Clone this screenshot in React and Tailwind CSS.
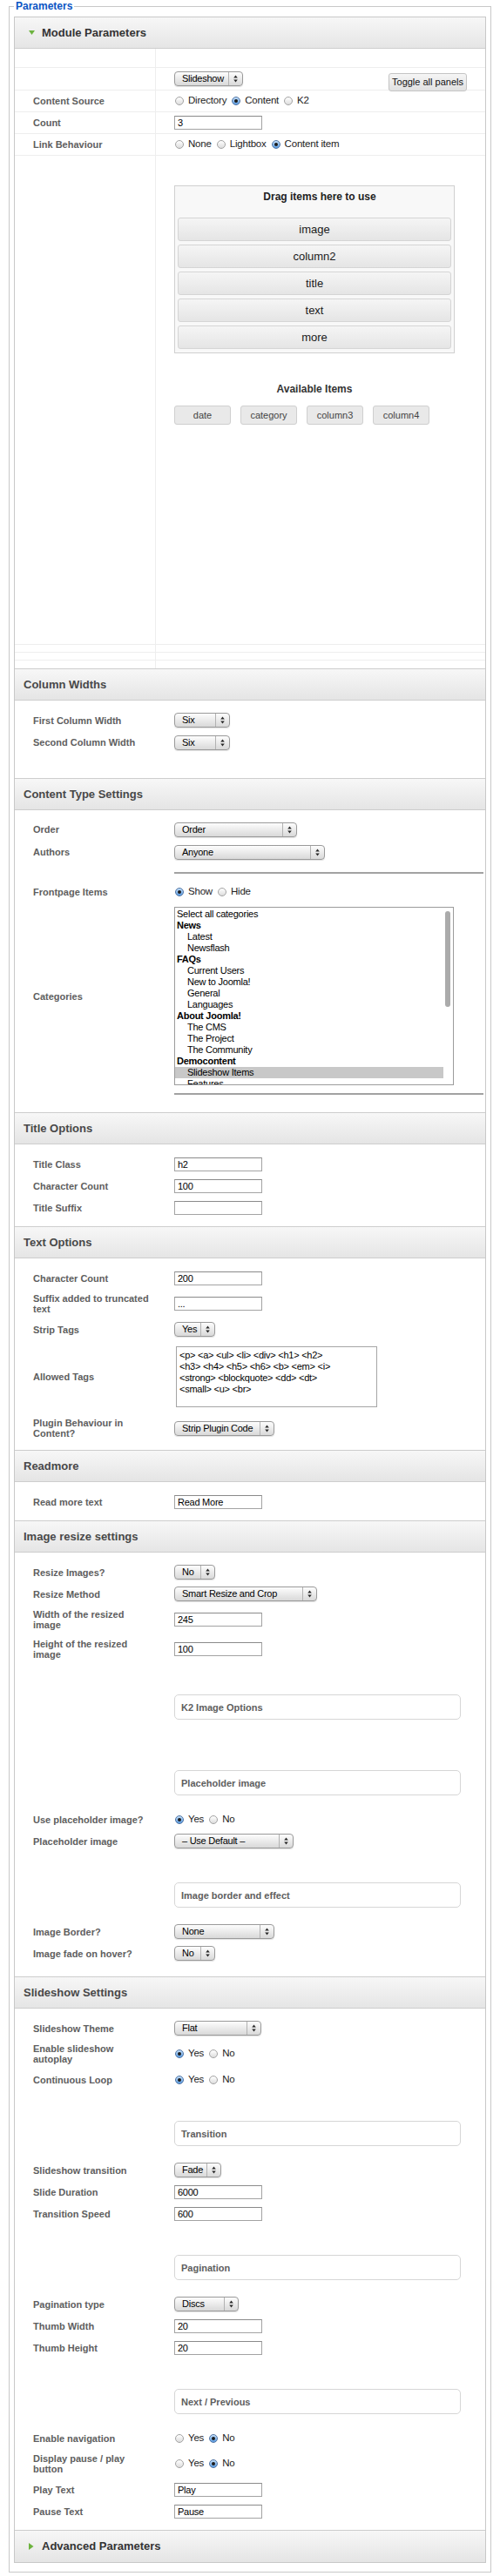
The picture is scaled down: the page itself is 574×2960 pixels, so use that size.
import React from 'react';

const SANS = "font-['Liberation_Sans',Arial,sans-serif]";
const LABEL = `${SANS} text-[11px] leading-[12px] font-bold text-[#5e5e5e]`;
const FIELD = `${SANS} text-[11px] tracking-[-0.25px] text-black`;

const Arrows = () => (
    <svg width="5" height="9" viewBox="0 0 5 9">
        <path d="M2.5 0.5L4.8 3.6H0.2Z M2.5 8.5L0.2 5.4H4.8Z" fill="#2a2a2a" />
    </svg>
);

const Select = ({ value, w }) => (
    <div className={`${w} h-[17px] flex rounded-[4px] border border-[#9a9a9a] bg-linear-to-b from-[#fdfdfd] to-[#d9d9d9] shadow-[0_1px_1px_rgba(0,0,0,0.12)]`}>
        <div className={`flex-1 pl-[8px] leading-[15px] whitespace-nowrap overflow-hidden ${FIELD}`}>{value}</div>
        <div className="w-[16px] shrink-0 border-l border-[#b2b2b2] flex items-center justify-center">
            <Arrows />
        </div>
    </div>
);

const Input = ({ value }) => (
    <div className={`w-[101px] h-[16px] border border-[#a3a3a3] border-t-[#8a8a8a] bg-white pl-[3px] leading-[14px] ${FIELD}`}>{value}</div>
);

const Radio = ({ checked, label }) => (
    <span className="inline-flex items-center mr-[6px]">
        <span className={`w-[10px] h-[10px] rounded-full border flex items-center justify-center ${checked ? 'border-[#4f73a3] bg-linear-to-b from-[#c4e0fb] to-[#5a9be0]' : 'border-[#a3a3a3] bg-linear-to-b from-white to-[#dddddd]'}`}>
            {checked && <span className="w-[4px] h-[4px] rounded-full bg-[#1c1c1c]" />}
        </span>
        <span className={`ml-[5px] text-[11.5px] tracking-[-0.2px] text-[#222] ${SANS}`}>{label}</span>
    </span>
);

const Radios = ({ options, value }) => (
    <div className="flex items-center ml-[1px]">
        {options.map((o) => <Radio key={o} label={o} checked={o === value} />)}
    </div>
);

const Header = ({ title, arrow, pos = 'mid' }) => {
    const edge = pos === 'first' ? 'h-[36px] border-b' : pos === 'last' ? 'h-[37px] border-t' : 'h-[37px] border-y';
    return (
        <div className={`${edge} border-[#cdcdcd] bg-linear-to-b from-[#f7f7f7] to-[#e5e5e5] flex items-center ${arrow ? 'pl-[16px]' : 'pl-[10px]'}`}>
            {arrow === 'down' && (
                <svg width="7" height="5" viewBox="0 0 7 5" className="mr-[8px]"><path d="M0 0H7L3.5 5Z" fill="#6cb33e" /></svg>
            )}
            {arrow === 'right' && (
                <svg width="6" height="8" viewBox="0 0 6 8" className="mr-[9px]"><path d="M0 0L5.5 4L0 8Z" fill="#6cb33e" /></svg>
            )}
            <span className={`${SANS} text-[13px] font-bold ${arrow ? 'text-[#333]' : 'text-[#484848]'}`}>{title}</span>
        </div>
    );
};

const Row = ({ label, h = 'h-[25px]', children }) => (
    <div className={`flex items-center ${h}`}>
        <div className="w-[183px] shrink-0 pl-[21px]">
            <div className={`w-[137px] ${LABEL}`}>{label}</div>
        </div>
        <div className="flex items-center">{children}</div>
    </div>
);

const Group = ({ title, top = 'pt-[35px]' }) => (
    <div className={`${top} pb-[15px] pl-[183px]`}>
        <div className={`w-[329px] h-[29px] rounded-[5px] border border-[#d6d6d6] bg-white flex items-center pl-[7px] ${LABEL}`}>{title}</div>
    </div>
);

const ModRow = ({ h, label, children, line = true, align = 'items-center' }) => (
    <div className={`flex ${h} ${line ? 'border-b border-[#eeeeee]' : ''}`}>
        <div className={`w-[162px] shrink-0 border-r border-[#eeeeee] pl-[21px] flex items-center ${LABEL}`}>{label}</div>
        <div className={`flex-1 pl-[21px] flex ${align}`}>{children}</div>
    </div>
);

const categories = [
    ['Select all categories', 0],
    ['News', 1],
    ['Latest', 2],
    ['Newsflash', 2],
    ['FAQs', 1],
    ['Current Users', 2],
    ['New to Joomla!', 2],
    ['General', 2],
    ['Languages', 2],
    ['About Joomla!', 1],
    ['The CMS', 2],
    ['The Project', 2],
    ['The Community', 2],
    ['Democontent', 1],
    ['Slideshow Items', 2, true],
    ['Features', 2],
];

const CategoryList = () => (
    <div className="w-[321px] h-[205px] border border-[#9b9b9b] bg-white flex overflow-hidden">
        <div className="flex-1 pt-[1px]">
            {categories.map(([name, level, selected]) => (
                <div
                    key={name}
                    className={`h-[13px] leading-[13px] whitespace-nowrap ${FIELD} ${level === 2 ? 'pl-[14px]' : 'pl-[2px]'} ${level === 1 ? 'font-bold' : ''} ${selected ? 'bg-[#c8c8c8]' : ''}`}
                >
                    {name}
                </div>
            ))}
        </div>
        <div className="w-[11px] shrink-0 pt-[4px] pl-[2px]">
            <div className="w-[6px] h-[110px] rounded-full bg-[#ababab]" />
        </div>
    </div>
);

const dragItems = ['image', 'column2', 'title', 'text', 'more'];
const available = ['date', 'category', 'column3', 'column4'];

const ModuleTable = () => (
    <div>
        <ModRow h="h-[22px]" />
        <ModRow h="h-[26px]" align="items-start">
            <div className="mt-[4px]"><Select value="Slideshow" w="w-[79px]" /></div>
            <div className={`ml-auto mt-[6px] mr-[21px] w-[90px] h-[21px] rounded-[3px] border border-[#c4c4c4] bg-linear-to-b from-[#f5f5f5] to-[#e1e1e1] flex items-center justify-center text-[11px] text-[#111] ${SANS}`}>
                Toggle all panels
            </div>
        </ModRow>
        <ModRow h="h-[25px]" label="Content Source">
            <Radios options={['Directory', 'Content', 'K2']} value="Content" />
        </ModRow>
        <ModRow h="h-[25px]" label="Count">
            <Input value="3" />
        </ModRow>
        <ModRow h="h-[25px]" label="Link Behaviour">
            <Radios options={['None', 'Lightbox', 'Content item']} value="Content item" />
        </ModRow>
        <ModRow h="h-[562px]" align="items-start">
            <div className="pt-[34px]">
                <div className="w-[322px] border border-[#d0d0d0] bg-[#f8f8f8] px-[3px] pb-[4px]">
                    <div className={`h-[36px] pt-[5px] pl-[12px] text-center text-[12px] leading-[14px] font-bold text-[#222] ${SANS}`}>
                        Drag items here to use
                    </div>
                    <div className="flex flex-col gap-[4px]">
                        {dragItems.map((it) => (
                            <div
                                key={it}
                                className={`h-[27px] rounded-[3px] border border-[#d5d5d5] bg-linear-to-b from-[#f5f5f5] to-[#e5e5e5] flex items-center justify-center text-[13px] text-[#1a1a1a] ${SANS}`}
                            >
                                {it}
                            </div>
                        ))}
                    </div>
                </div>
                <div className={`w-[322px] mt-[34px] h-[14px] leading-[14px] text-center text-[12px] font-bold text-[#333] ${SANS}`}>
                    Available Items
                </div>
                <div className="mt-[12px] flex gap-[11px]">
                    {available.map((it) => (
                        <div
                            key={it}
                            className={`w-[65px] h-[22px] rounded-[3px] border border-[#cfcfcf] bg-[#e9e9e9] flex items-center justify-center text-[11px] text-[#444] ${SANS}`}
                        >
                            {it}
                        </div>
                    ))}
                </div>
            </div>
        </ModRow>
        <ModRow h="h-[9px]" />
        <ModRow h="h-[9px]" />
        <ModRow h="h-[9px]" line={false} />
    </div>
);

const App = () => (
    <div className="min-h-screen bg-white pt-0">
        <fieldset className="ml-[10px] w-[554px] border border-[#c8c8c8] px-[5px] pt-[5px] pb-[10px]">
            <legend className={`px-[2px] text-[12px] leading-[14px] font-bold text-[#0b55c4] ${SANS}`}>Parameters</legend>
            <div className="border border-[#c8c8c8]">
                <Header title="Module Parameters" arrow="down" pos="first" />
                <ModuleTable />

                <Header title="Column Widths" />
                <div className="pt-[10px] pb-[28px]">
                    <Row label="First Column Width"><Select value="Six" w="w-[64px]" /></Row>
                    <Row label="Second Column Width" h="h-[26px]"><Select value="Six" w="w-[64px]" /></Row>
                </div>

                <Header title="Content Type Settings" />
                <div className="pt-[9px] pb-[20px]">
                    <Row label="Order" h="h-[26px]"><Select value="Order" w="w-[141px]" /></Row>
                    <Row label="Authors" h="h-[26px]"><Select value="Anyone" w="w-[173px]" /></Row>
                    <div className="mt-[10px] ml-[183px] w-[355px] h-[2px] bg-[#a2a2a2]" />
                    <div className="h-[8px]" />
                    <Row label="Frontpage Items">
                        <Radios options={['Show', 'Hide']} value="Show" />
                    </Row>
                    <div className="flex items-center py-[5px]">
                        <div className="w-[183px] shrink-0 pl-[21px]">
                            <div className={LABEL}>Categories</div>
                        </div>
                        <CategoryList />
                    </div>
                    <div className="mt-[4px] ml-[183px] w-[355px] h-[2px] bg-[#a2a2a2]" />
                </div>

                <Header title="Title Options" />
                <div className="pt-[10px] pb-[9px]">
                    <Row label="Title Class"><Input value="h2" /></Row>
                    <Row label="Character Count"><Input value="100" /></Row>
                    <Row label="Title Suffix"><Input value="" /></Row>
                </div>

                <Header title="Text Options" />
                <div className="pt-[10px] pb-[8px]">
                    <Row label="Character Count"><Input value="200" /></Row>
                    <Row label="Suffix added to truncated text" h="h-[34px]"><Input value="..." /></Row>
                    <Row label="Strip Tags"><Select value="Yes" w="w-[47px]" /></Row>
                    <Row label="Allowed Tags" h="h-[84px]">
                        <div className={`ml-[2px] w-[231px] h-[70px] border border-[#a5a5a5] bg-white pl-[3px] pt-[3px] leading-[13px] ${FIELD}`}>
                            {'<p> <a> <ul> <li> <div> <h1> <h2>'}<br />
                            {'<h3> <h4> <h5> <h6> <b> <em> <i>'}<br />
                            {'<strong> <blockquote> <dd> <dt>'}<br />
                            {'<small> <u> <br>'}
                        </div>
                    </Row>
                    <Row label="Plugin Behaviour in Content?" h="h-[34px]"><Select value="Strip Plugin Code" w="w-[115px]" /></Row>
                </div>

                <Header title="Readmore" />
                <div className="pt-[10px] pb-[9px]">
                    <Row label="Read more text"><Input value="Read More" /></Row>
                </div>

                <Header title="Image resize settings" />
                <div className="pt-[10px] pb-[14px]">
                    <Row label="Resize Images?"><Select value="No" w="w-[47px]" /></Row>
                    <Row label="Resize Method"><Select value="Smart Resize and Crop" w="w-[164px]" /></Row>
                    <Row label="Width of the resized image" h="h-[34px]"><Input value="245" /></Row>
                    <Row label="Height of the resized image" h="h-[34px]"><Input value="100" /></Row>
                    <Group title="K2 Image Options" />
                    <Group title="Placeholder image" top="pt-[43px]" />
                    <Row label="Use placeholder image?">
                        <Radios options={['Yes', 'No']} value="Yes" />
                    </Row>
                    <Row label="Placeholder image"><Select value="– Use Default –" w="w-[137px]" /></Row>
                    <Group title="Image border and effect" />
                    <Row label="Image Border?"><Select value="None" w="w-[115px]" /></Row>
                    <Row label="Image fade on hover?"><Select value="No" w="w-[47px]" /></Row>
                </div>

                <Header title="Slideshow Settings" />
                <div className="pt-[10px] pb-[9px]">
                    <Row label="Slideshow Theme"><Select value="Flat" w="w-[100px]" /></Row>
                    <Row label="Enable slideshow autoplay" h="h-[34px]">
                        <Radios options={['Yes', 'No']} value="Yes" />
                    </Row>
                    <Row label="Continuous Loop">
                        <Radios options={['Yes', 'No']} value="Yes" />
                    </Row>
                    <Group title="Transition" />
                    <Row label="Slideshow transition"><Select value="Fade" w="w-[54px]" /></Row>
                    <Row label="Slide Duration"><Input value="6000" /></Row>
                    <Row label="Transition Speed"><Input value="600" /></Row>
                    <Group title="Pagination" />
                    <Row label="Pagination type"><Select value="Discs" w="w-[74px]" /></Row>
                    <Row label="Thumb Width"><Input value="20" /></Row>
                    <Row label="Thumb Height"><Input value="20" /></Row>
                    <Group title="Next / Previous" />
                    <Row label="Enable navigation">
                        <Radios options={['Yes', 'No']} value="No" />
                    </Row>
                    <Row label="Display pause / play button" h="h-[34px]">
                        <Radios options={['Yes', 'No']} value="No" />
                    </Row>
                    <Row label="Play Text"><Input value="Play" /></Row>
                    <Row label="Pause Text"><Input value="Pause" /></Row>
                </div>

                <Header title="Advanced Parameters" arrow="right" pos="last" />
            </div>
        </fieldset>
    </div>
);

export default App;
